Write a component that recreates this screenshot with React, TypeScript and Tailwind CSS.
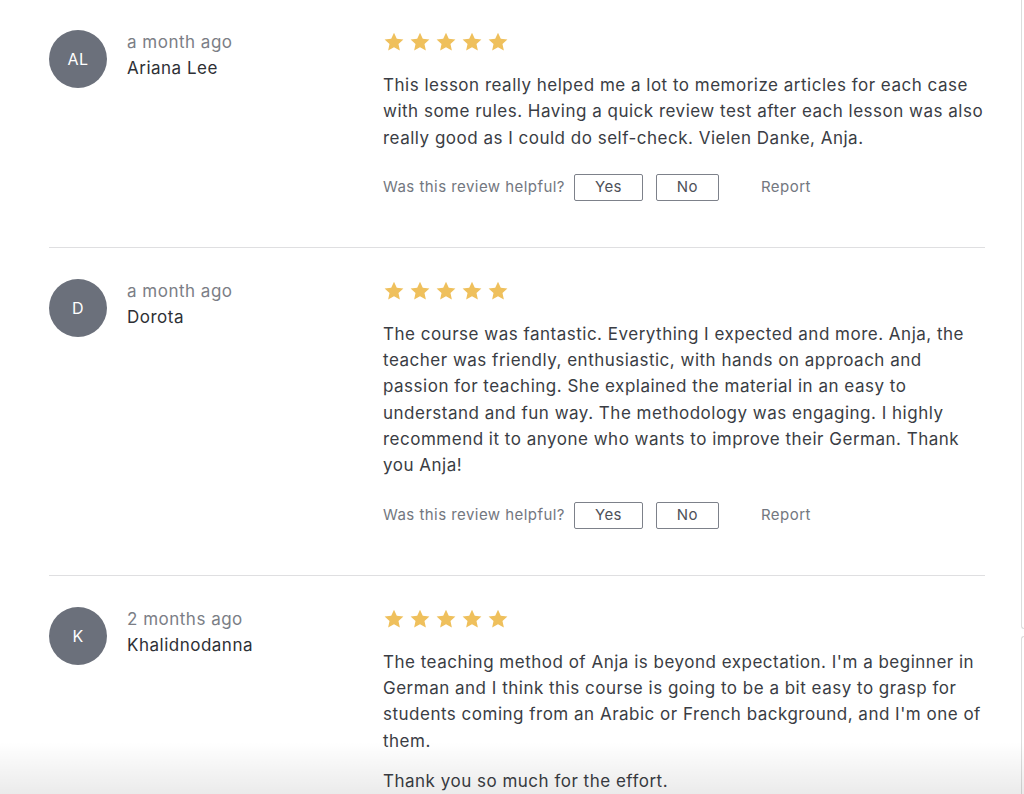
import { useState } from 'react'

type Review = {
  initials: string
  when: string
  name: string
  paragraphs: string[]
}

const reviews: Review[] = [
  {
    initials: 'AL',
    when: 'a month ago',
    name: 'Ariana Lee',
    paragraphs: [
      'This lesson really helped me a lot to memorize articles for each case with some rules. Having a quick review test after each lesson was also really good as I could do self-check. Vielen Danke, Anja.',
    ],
  },
  {
    initials: 'D',
    when: 'a month ago',
    name: 'Dorota',
    paragraphs: [
      'The course was fantastic. Everything I expected and more. Anja, the teacher was friendly, enthusiastic, with hands on approach and passion for teaching. She explained the material in an easy to understand and fun way. The methodology was engaging. I highly recommend it to anyone who wants to improve their German. Thank you Anja!',
    ],
  },
  {
    initials: 'K',
    when: '2 months ago',
    name: 'Khalidnodanna',
    paragraphs: [
      "The teaching method of Anja is beyond expectation. I'm a beginner in German and I think this course is going to be a bit easy to grasp for students coming from an Arabic or French background, and I'm one of them.",
      'Thank you so much for the effort.',
    ],
  },
]

function Star() {
  return (
    <svg width="22" height="22" viewBox="0 0 24 24" className="shrink-0">
      <path
        d="M12 1.8l3.05 6.6 7.2.8-5.35 4.9 1.5 7.1L12 17.6l-6.4 3.6 1.5-7.1L1.75 9.2l7.2-.8z"
        fill="#efc05c"
      />
    </svg>
  )
}

function ReviewItem({ review, first }: { review: Review; first: boolean }) {
  const [vote, setVote] = useState<'yes' | 'no' | null>(null)

  return (
    <div
      className={`flex border-b border-[#dfdfe1] pb-[46px] ${first ? 'pt-[30px]' : 'pt-[31px]'}`}
    >
      <div className="flex w-[334px] shrink-0 items-start gap-5">
        <div className="flex h-[58px] w-[58px] shrink-0 items-center justify-center rounded-full bg-[#6b707b] text-[16px] tracking-[0.5px] text-white">
          {review.initials}
        </div>
        <div className="-mt-[1px] text-[17px] leading-[26px] tracking-[0.5px]">
          <div className="text-[#7b7e86]">{review.when}</div>
          <div className="text-[#2e3035]">{review.name}</div>
        </div>
      </div>

      <div className="flex-1">
        <div className="mt-[1px] flex gap-1">
          <Star />
          <Star />
          <Star />
          <Star />
          <Star />
        </div>

        <div className="mt-[19px] flex flex-col gap-[14px] text-[17px] leading-[26.3px] tracking-[0.5px] text-[#3a3d44]">
          {review.paragraphs.map((p, i) => (
            <p key={i}>{p}</p>
          ))}
        </div>

        <div className="mt-[23px] flex items-center text-[15px] tracking-[0.45px] text-[#737780]">
          <span>Was this review helpful?</span>
          <button
            onClick={() => setVote('yes')}
            className={`ml-[9px] h-[27px] w-[69px] rounded-[2px] border border-[#7d818a] text-[#4e5159] ${vote === 'yes' ? 'bg-[#f1f2f4]' : ''}`}
          >
            Yes
          </button>
          <button
            onClick={() => setVote('no')}
            className={`ml-[13px] h-[27px] w-[63px] rounded-[2px] border border-[#7d818a] text-[#4e5159] ${vote === 'no' ? 'bg-[#f1f2f4]' : ''}`}
          >
            No
          </button>
          <span className="ml-[42px]">Report</span>
        </div>
      </div>
    </div>
  )
}

export default function App() {
  return (
    <div
      className="relative flex h-[794px] w-[1024px] overflow-hidden bg-white"
      style={{ fontFamily: 'Inter, "Noto Sans", sans-serif' }}
    >
      <div className="w-[1021px] shrink-0 pl-[49px]">
        <div className="w-[936px]">
          {reviews.map((r, i) => (
            <ReviewItem key={r.name} review={r} first={i === 0} />
          ))}
        </div>
      </div>

      <div className="flex flex-1 flex-col gap-[7px]">
        <div className="h-[629px] rounded-bl-[3px] border-b border-l border-[#dcdcdc]" />
        <div className="flex-1 rounded-tl-[3px] border-t border-l border-[#dcdcdc]" />
      </div>

      <div className="pointer-events-none absolute bottom-0 left-0 right-0 h-[52px] bg-gradient-to-b from-transparent to-black/[0.08]" />
    </div>
  )
}
